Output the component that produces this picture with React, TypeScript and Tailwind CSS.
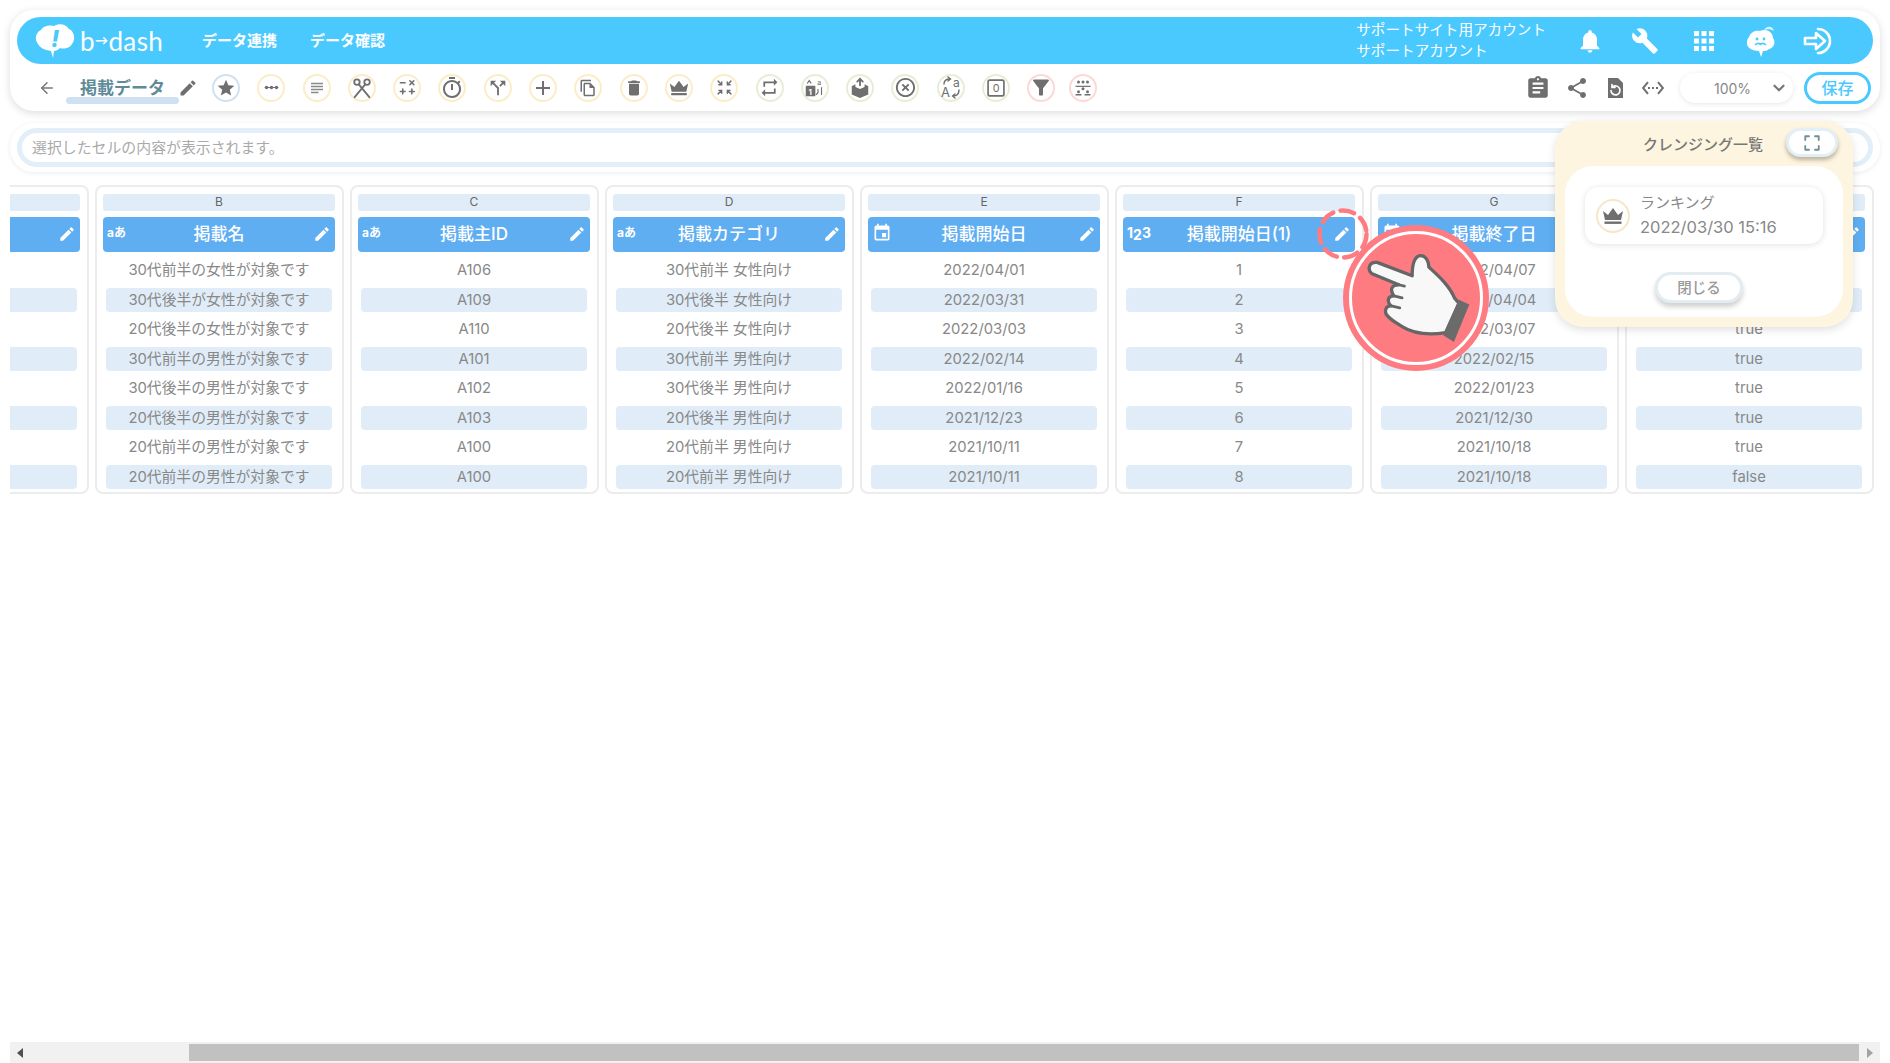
import type { ReactNode } from 'react'
import { ArrowLeft, ChevronDown } from 'lucide-react'
import {
  MdStar,
  MdSubject,
  MdOutlineTimer,
  MdCallSplit,
  MdAdd,
  MdOutlineFileCopy,
  MdDelete,
  MdRepeat,
  MdHighlightOff,
  MdFilterAlt,
  MdEdit,
  MdNotifications,
  MdBuild,
  MdApps,
  MdAssignment,
  MdShare,
  MdSettingsEthernet,
  MdEvent,
} from 'react-icons/md'

// Small custom icons
function Svg({ children, className = 'w-[20px] h-[20px]' }: { children: ReactNode; className?: string }) {
  return (
    <svg viewBox="0 0 24 24" className={className} fill="none">
      {children}
    </svg>
  )
}

function CrownIcon({ className }: { className?: string }) {
  return (
    <Svg className={className}>
      <path d="M2 7l5 4 5-7 5 7 5-4-2 9H4z" fill="#6f6f6f" />
      <rect x="3.5" y="17.5" width="17" height="2.4" fill="#6f6f6f" />
    </Svg>
  )
}

const iconStroke = { stroke: '#6f6f6f', strokeWidth: 2, strokeLinecap: 'round' as const }

const toolIcons: { color: string; icon: ReactNode }[] = [
  { color: 'border-[#cfe2f3]', icon: <MdStar className="w-[20px] h-[20px] text-[#6f6f6f]" /> },
  {
    color: 'border-[#fcedc9]',
    icon: (
      <Svg className="w-[17px] h-[17px]">
        <path d="M3 12h18" {...iconStroke} strokeWidth={1.5} />
        <circle cx="5" cy="12" r="2.4" fill="#6f6f6f" />
        <circle cx="12" cy="12" r="2.4" fill="#6f6f6f" />
        <circle cx="19" cy="12" r="2.4" fill="#6f6f6f" />
      </Svg>
    ),
  },
  { color: 'border-[#fcedc9]', icon: <MdSubject className="w-[18px] h-[18px] text-[#8a8a8a]" /> },
  {
    color: 'border-[#fcedc9]',
    icon: (
      <Svg className="w-[22px] h-[22px]">
        <circle cx="6.5" cy="5.5" r="3" {...iconStroke} />
        <circle cx="17.5" cy="5.5" r="3" {...iconStroke} />
        <path d="M8.5 8L20 22M15.5 8L4 22" {...iconStroke} />
      </Svg>
    ),
  },
  {
    color: 'border-[#fcedc9]',
    icon: (
      <Svg className="w-[19px] h-[19px]">
        <path d="M3 6h6M15 3.5l5 5M20 3.5l-5 5M6 14v6M3 17h6M17.5 14v6M14.5 17h6" {...iconStroke} />
      </Svg>
    ),
  },
  { color: 'border-[#fcedc9]', icon: <MdOutlineTimer className="w-[24px] h-[24px] text-[#6f6f6f]" /> },
  { color: 'border-[#fcedc9]', icon: <MdCallSplit className="w-[22px] h-[22px] text-[#6f6f6f]" /> },
  { color: 'border-[#fcedc9]', icon: <MdAdd className="w-[24px] h-[24px] text-[#6f6f6f]" /> },
  { color: 'border-[#fcedc9]', icon: <MdOutlineFileCopy className="w-[18px] h-[18px] text-[#6f6f6f]" /> },
  { color: 'border-[#fcedc9]', icon: <MdDelete className="w-[20px] h-[20px] text-[#6f6f6f]" /> },
  { color: 'border-[#fcedc9]', icon: <CrownIcon className="w-[22px] h-[22px]" /> },
  {
    color: 'border-[#fcedc9]',
    icon: (
      <Svg className="w-[17px] h-[17px]">
        <path d="M3 3l5 5M8 4v4H4M21 3l-5 5M16 4v4h4M3 21l5-5M8 20v-4H4M21 21l-5-5M16 20v-4h4" {...iconStroke} />
      </Svg>
    ),
  },
  { color: 'border-[#e7eed6]', icon: <MdRepeat className="w-[21px] h-[21px] text-[#6f6f6f]" /> },
  {
    color: 'border-[#e7eed6]',
    icon: (
      <Svg className="w-[21px] h-[21px]">
        <rect x="2" y="10" width="11" height="12" rx="1" fill="#6f6f6f" />
        <text x="5" y="20" fontSize="9" fill="#fff" fontFamily="Inter, sans-serif" fontWeight="700">1</text>
        <text x="15" y="9" fontSize="8" fill="#6f6f6f" fontFamily="Inter, sans-serif">a</text>
        <path d="M4 7l2-3 2 3M16 14v4l-2 2M20 12v8" stroke="#6f6f6f" strokeWidth="1.3" strokeLinecap="round" />
      </Svg>
    ),
  },
  {
    color: 'border-[#e7eed6]',
    icon: (
      <Svg className="w-[22px] h-[22px]">
        <path d="M3 10l4-2v3l5 2 5-2V8l4 2v9l-9 4-9-4z" fill="#6f6f6f" />
        <path d="M12 9V2M9 5l3-3 3 3" {...iconStroke} />
      </Svg>
    ),
  },
  { color: 'border-[#e7eed6]', icon: <MdHighlightOff className="w-[23px] h-[23px] text-[#6f6f6f]" /> },
  {
    color: 'border-[#e7eed6]',
    icon: (
      <Svg className="w-[24px] h-[24px]">
        <text x="2" y="21" fontSize="13" fill="#6f6f6f" fontFamily="Inter, sans-serif">A</text>
        <text x="14" y="11" fontSize="12" fill="#6f6f6f" fontFamily="Inter, sans-serif">a</text>
        <path d="M5 8c0-3 2-5 6-5M9 1l2.5 2L9 5M20 14c0 4-2 6-6 6M16 18l-2.5 2 2.5 2" stroke="#6f6f6f" strokeWidth="1.4" strokeLinecap="round" />
      </Svg>
    ),
  },
  {
    color: 'border-[#e7eed6]',
    icon: (
      <Svg className="w-[20px] h-[20px]">
        <rect x="2.5" y="2.5" width="19" height="19" rx="2" stroke="#6f6f6f" strokeWidth="2" />
        <text x="8" y="17" fontSize="13" fill="#6f6f6f" fontFamily="Inter, sans-serif">0</text>
      </Svg>
    ),
  },
  { color: 'border-[#fdd8d6]', icon: <MdFilterAlt className="w-[25px] h-[25px] text-[#6f6f6f]" /> },
]

const columns = [
  { key: '', title: '', type: 'none', rows: ['', '', '', '', '', '', '', ''] },
  {
    key: 'B',
    title: '掲載名',
    type: 'text',
    rows: [
      '30代前半の女性が対象です',
      '30代後半が女性が対象です',
      '20代後半の女性が対象です',
      '30代前半の男性が対象です',
      '30代後半の男性が対象です',
      '20代後半の男性が対象です',
      '20代前半の男性が対象です',
      '20代前半の男性が対象です',
    ],
  },
  { key: 'C', title: '掲載主ID', type: 'text', rows: ['A106', 'A109', 'A110', 'A101', 'A102', 'A103', 'A100', 'A100'] },
  {
    key: 'D',
    title: '掲載カテゴリ',
    type: 'text',
    rows: [
      '30代前半 女性向け',
      '30代後半 女性向け',
      '20代後半 女性向け',
      '30代前半 男性向け',
      '30代後半 男性向け',
      '20代後半 男性向け',
      '20代前半 男性向け',
      '20代前半 男性向け',
    ],
  },
  {
    key: 'E',
    title: '掲載開始日',
    type: 'date',
    rows: ['2022/04/01', '2022/03/31', '2022/03/03', '2022/02/14', '2022/01/16', '2021/12/23', '2021/10/11', '2021/10/11'],
  },
  { key: 'F', title: '掲載開始日(1)', type: 'number', rows: ['1', '2', '3', '4', '5', '6', '7', '8'] },
  {
    key: 'G',
    title: '掲載終了日',
    type: 'date',
    rows: ['2022/04/07', '2022/04/04', '2022/03/07', '2022/02/15', '2022/01/23', '2021/12/30', '2021/10/18', '2021/10/18'],
  },
  { key: 'H', title: '', type: 'text', rows: ['true', 'true', 'true', 'true', 'true', 'true', 'true', 'false'] },
]

function TypeIcon({ type }: { type: string }) {
  if (type === 'none') return null
  if (type === 'date') return <MdEvent className="w-[20px] h-[20px] text-white" />
  if (type === 'number') {
    return (
      <span className="flex text-[14px] leading-none font-bold text-white">
        <span>1</span>
        <span className="translate-y-[2px]">2</span>
        <span>3</span>
      </span>
    )
  }
  return <span className="text-[12px] font-bold text-white">aあ</span>
}

function Column({ col }: { col: (typeof columns)[number] }) {
  return (
    <div className="w-[249px] h-[309px] shrink-0 rounded-[8px] border-2 border-[#ececec] pl-[6px] pr-[7px] pt-[7px]">
      <div className="h-[17px] rounded-[3px] bg-[#e0edf8] text-center text-[12px] leading-[15px] text-[#666]">{col.key}</div>
      <div className="relative mt-[6px] h-[35px] rounded-[4px] bg-[#5faef2] flex items-center justify-center">
        <span className="absolute left-[1px] top-[5px] flex items-center h-[22px] pl-[3px]">
          <TypeIcon type={col.type} />
        </span>
        <span className="text-[17px] font-medium text-white">{col.title}</span>
        <MdEdit className="absolute right-[4px] top-[8px] w-[18px] h-[18px] text-white" />
      </div>
      <div className="mt-[6px] mx-[3px] flex flex-col gap-[4.75px]">
        {col.rows.map((r, i) => (
          <div
            key={i}
            className={`h-[24.75px] rounded-[4px] text-center text-[14.8px] leading-[25.5px] text-[#888] ${i % 2 === 1 ? 'bg-[#e0edf8]' : ''}`}
          >
            {r}
          </div>
        ))}
      </div>
    </div>
  )
}

function HandBadge() {
  return (
    <div className="absolute left-[1343px] top-[225px] w-[146px] h-[146px] rounded-full bg-[#ff7b82] flex items-center justify-center">
      <div className="w-[134px] h-[134px] rounded-full border-[3px] border-white" />
      <svg viewBox="728 166 437 437" className="absolute inset-0 w-full h-full">
        <path
          d="M935 318C935 290 940 262 958 258C975 255 985 275 985 292C1010 315 1045 345 1062 385L1075 400L1035 488C990 495 945 495 905 470C880 455 855 440 855 425C855 412 862 408 872 408C858 395 862 378 880 378C868 360 872 345 895 345L815 312C800 300 805 275 830 278Z"
          fill="#f8f8f8"
          stroke="#666"
          strokeWidth="10"
          strokeLinejoin="round"
        />
        <path d="M895 345L912 349M880 378L905 384M872 408L898 414" stroke="#666" strokeWidth="8" strokeLinecap="round" />
        <path d="M1075 390L1106 404L1060 516L1028 496Z" fill="#6b6b6b" />
      </svg>
    </div>
  )
}

function CleansingPopup() {
  return (
    <div className="absolute left-[1555px] top-[121px] w-[298px] h-[206px] rounded-[28px] bg-[#fdf5e0] shadow-[0_3px_8px_rgba(0,0,0,0.12)] px-[10px] pt-[7px]">
      <div className="relative h-[38px] flex items-center pb-[3px]">
        <span className="ml-[78px] text-[15px] font-medium text-[#777]">クレンジング一覧</span>
        <div className="absolute left-[221px] top-0 w-[52px] h-[29px] rounded-full bg-white border-[3px] border-[#e2eff9] shadow-[0_3px_4px_rgba(90,80,50,0.4)] flex items-center justify-center">
          <svg viewBox="0 0 24 24" className="w-[18px] h-[18px]" fill="none">
            <path d="M3 8V3h5M16 3h5v5M21 16v5h-5M8 21H3v-5" stroke="#6f8f98" strokeWidth="2.4" strokeLinecap="round" strokeLinejoin="round" />
          </svg>
        </div>
      </div>
      <div className="h-[151px] rounded-[28px] bg-white pt-[21px] flex flex-col items-center">
        <div className="w-[238px] h-[57px] rounded-[14px] bg-white shadow-[0_1px_6px_rgba(0,0,0,0.12)] flex items-center pl-[11px]">
          <div className="w-[34px] h-[34px] rounded-full border-2 border-[#f5e8c8] flex items-center justify-center">
            <CrownIcon className="w-[24px] h-[24px]" />
          </div>
          <div className="ml-[10px] pb-[2px] text-[15px] leading-[24px] text-[#888]">
            <div>ランキング</div>
            <div className="text-[16.5px]">2022/03/30 15:16</div>
          </div>
        </div>
        <div className="mt-[28px] self-start ml-[90px] w-[88px] h-[31px] rounded-full bg-white border-[3px] border-[#e3ecf0] shadow-[0_4px_5px_rgba(0,0,0,0.18)] text-center text-[14.5px] leading-[25px] font-medium text-[#999]">
          閉じる
        </div>
      </div>
    </div>
  )
}

export default function App() {
  return (
    <div className="relative h-screen w-full overflow-hidden bg-white flex flex-col font-['Inter','Noto_Sans_CJK_JP',sans-serif]">
      {/* Header */}
      <header className="mx-[10px] mt-[10px] h-[101px] shrink-0 rounded-[24px] bg-white shadow-[0_2px_8px_rgba(0,0,0,0.14)] px-[7px] pt-[7px]">
        <div className="h-[47px] rounded-full bg-[#4ac9ff] flex items-center pl-[18px] pr-[38px] text-white">
          <svg viewBox="0 0 40 34" className="w-[40px] h-[34px]">
            <path
              d="M6 6C9 1 16 1 19 2C24-1 31 0 34 5C39 7 41 15 37 20C34 25 28 25 25 24C23 26 21 27 19 27L18 34L16 27C11 26 6 25 3 20C-1 15 1 8 6 6Z"
              fill="#fff"
            />
            <text x="16" y="23" fontSize="23" fontWeight="800" fontStyle="italic" fill="#4ac9ff" fontFamily="Inter, sans-serif">!</text>
          </svg>
          <span className="ml-[5px] w-[82px] flex items-center whitespace-nowrap text-[26px] tracking-[0.4px] font-['Lato',sans-serif] leading-none">
            b<span className="text-[13px] font-bold">→</span>dash
          </span>
          <span className="ml-[40px] pt-[2px] text-[15px] font-bold">データ連携</span>
          <span className="ml-[33px] pt-[2px] text-[15px] font-bold">データ確認</span>
          <div className="ml-auto pt-[1px] text-[14.6px] leading-[21px]">
            <div>サポートサイト用アカウント</div>
            <div>サポートアカウント</div>
          </div>
          <MdNotifications className="ml-[30px] w-[28px] h-[28px]" />
          <MdBuild className="ml-[27px] w-[28px] h-[28px]" />
          <MdApps className="ml-[30px] w-[30px] h-[30px]" />
          <svg viewBox="0 0 32 32" className="ml-[26px] w-[32px] h-[32px]">
            <path d="M4 12C6 6 12 5 15 6C21 3 28 7 28 13C31 17 29 23 24 24C22 26 20 26 18 26L16 32L14 26C8 26 1 23 2 17C2 15 3 13 4 12Z" fill="#fff" />
            <path d="M19 5C22 0 28 1 29 6C26 4 22 4 19 5Z" fill="#d9f3ff" />
            <circle cx="12" cy="14" r="1.4" fill="#4ac9ff" />
            <circle cx="19" cy="14" r="1.4" fill="#4ac9ff" />
            <path d="M10 20c2-2 4-2 5.500-.6c1.500-1.400 3.500-1.400 5.500.6" stroke="#4ac9ff" strokeWidth="1.6" fill="none" />
          </svg>
          <svg viewBox="0 0 32 32" className="ml-[26px] w-[32px] h-[32px]" fill="none">
            <path d="M15 4a12 12 0 1 1 0 24" stroke="#fff" strokeWidth="2.6" strokeLinecap="round" />
            <path d="M2 13h11V8l9 8-9 8v-5H2z" stroke="#fff" strokeWidth="2.6" strokeLinejoin="round" />
          </svg>
        </div>
        <div className="h-[47px] flex items-center pr-[2px]">
          <ArrowLeft className="ml-[21px] w-[18px] h-[18px] text-[#777]" />
          <div className="ml-[10px] w-[113px] pt-[7px] flex flex-col items-center">
            <span className="text-[17px] leading-[20px] font-bold text-[#5f8a98]">掲載データ</span>
            <div className="-mt-[1px] h-[7px] w-full rounded-full bg-[#cfe0f0]" />
          </div>
          <MdEdit className="-ml-[1px] w-[20px] h-[20px] text-[#6f6f6f]" />
          <div className="ml-[14px] flex items-center gap-[17.3px]">
            {toolIcons.map((t, i) => (
              <div key={i} className={`w-[28px] h-[28px] rounded-full border-2 ${t.color} flex items-center justify-center`}>
                {t.icon}
              </div>
            ))}
          </div>
          <div className="ml-[14px] w-[28px] h-[28px] rounded-full border-2 border-[#fdd8d6] flex items-center justify-center">
            <Svg className="w-[18px] h-[18px]">
              <g fill="#6f6f6f">
                <circle cx="6" cy="4" r="2" /><circle cx="12" cy="4" r="2" /><circle cx="18" cy="4" r="2" />
                <rect x="2" y="9" width="20" height="1.6" />
                <circle cx="12" cy="13" r="2" /><circle cx="6" cy="17" r="2" /><circle cx="18" cy="17" r="2" />
                <rect x="2" y="20" width="8" height="2" /><rect x="14" y="20" width="8" height="2" />
              </g>
            </Svg>
          </div>
          <div className="ml-auto flex items-center gap-[14px]">
            <MdAssignment className="w-[26px] h-[26px] text-[#6f6f6f]" />
            <MdShare className="w-[24px] h-[24px] text-[#6f6f6f]" />
            <Svg className="w-[24px] h-[24px]">
              <path d="M5 2h10l5 5v15H5z" fill="#6f6f6f" />
              <path d="M8 14.500a4.500 4.500 0 1 0 1.500-3.400M9 8.500v3h3" stroke="#fff" strokeWidth="1.7" strokeLinecap="round" />
            </Svg>
            <MdSettingsEthernet className="w-[24px] h-[24px] text-[#6f6f6f]" />
          </div>
          <div className="ml-[15px] w-[113px] h-[30px] rounded-full bg-white shadow-[0_1px_5px_rgba(0,0,0,0.1)] flex items-center text-[14px] text-[#888]">
            <span className="ml-[34px] pt-[1px]">100%</span>
            <ChevronDown className="ml-auto mr-[5px] w-[18px] h-[18px] text-[#777]" strokeWidth={3} />
          </div>
          <div className="ml-[11px] w-[67px] h-[32px] rounded-full border-[3px] border-[#4ac9ff] text-center text-[16px] leading-[27px] font-medium text-[#4ac9ff]">
            保存
          </div>
        </div>
      </header>

      {/* Formula bar */}
      <div className="mx-[10px] mt-[12px] h-[49px] shrink-0 rounded-[24px] bg-white shadow-[0_1px_5px_rgba(0,0,0,0.08)] px-[7px] py-[5px]">
        <div className="h-[39px] rounded-full border-[5px] border-[#e2eff9] flex items-center pl-[10px] pt-[2px] text-[14.9px] text-[#aaa]">
          選択したセルの内容が表示されます。
        </div>
      </div>

      {/* Sheet */}
      <div className="mt-[13px] ml-[10px] flex-1 overflow-hidden">
        <div className="-ml-[170px] flex gap-[6px]">
          {columns.map((c, i) => (
            <Column key={i} col={c} />
          ))}
        </div>
      </div>

      {/* Scrollbar */}
      <div className="mx-[10px] h-[21px] shrink-0 bg-[#f1f1f1] flex items-center">
        <span className="ml-[7px] w-0 h-0 border-y-[5px] border-y-transparent border-r-[6px] border-r-[#505050]" />
        <div className="ml-[166px] h-[17px] w-[1670px] bg-[#c1c1c1]" />
        <span className="ml-[8px] w-0 h-0 border-y-[5px] border-y-transparent border-l-[6px] border-l-[#a3a3a3]" />
      </div>

      {/* Overlays */}
      <svg viewBox="0 0 54 54" className="absolute left-[1316px] top-[207px] w-[54px] h-[54px]" fill="none">
        <circle cx="27" cy="27" r="23.500" stroke="#ff7b82" strokeWidth="4.500" strokeDasharray="14 7.500" strokeLinecap="round" />
      </svg>
      <HandBadge />
      <CleansingPopup />
    </div>
  )
}
